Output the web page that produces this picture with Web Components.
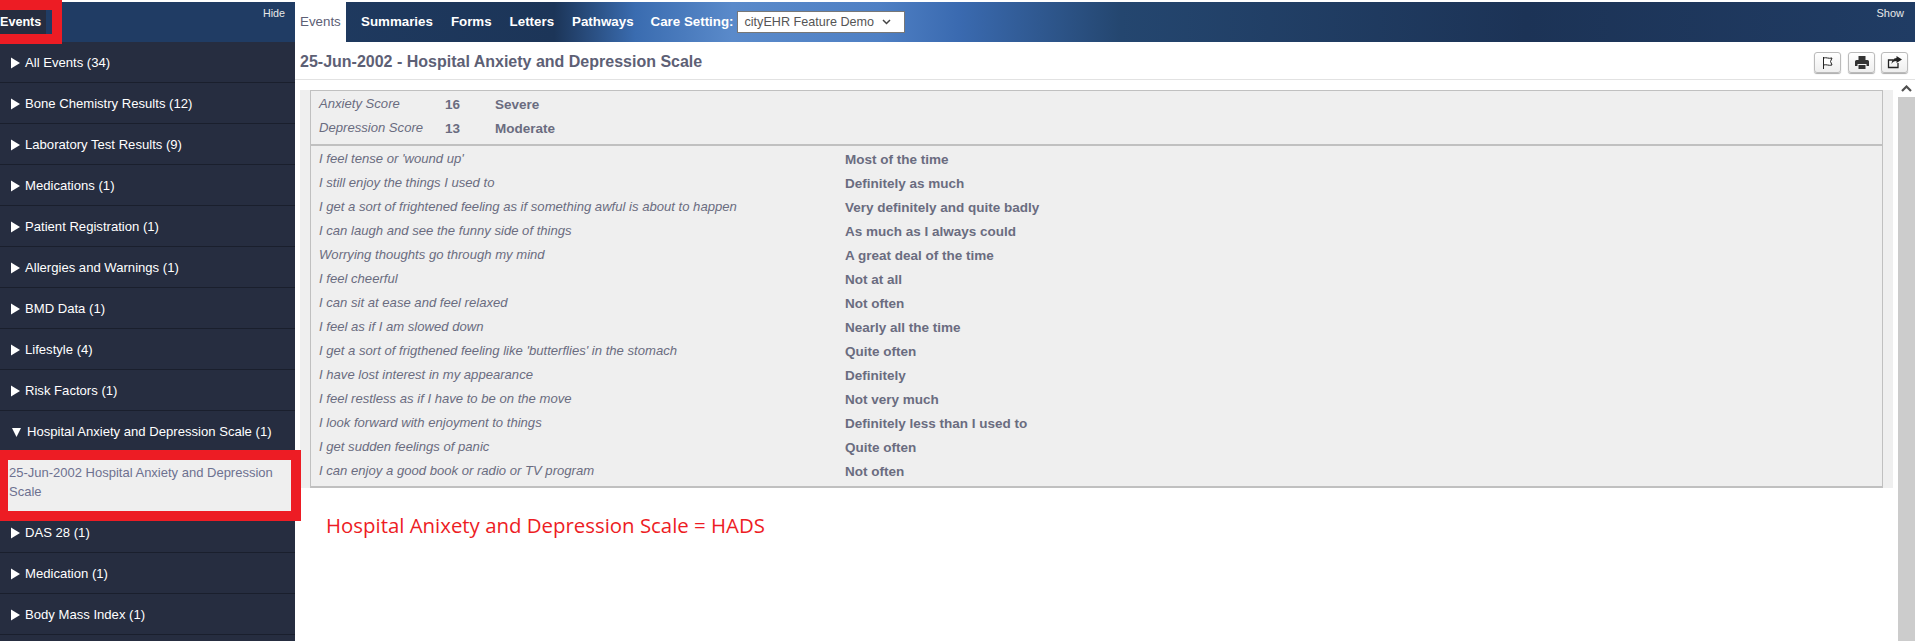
<!DOCTYPE html>
<html>
<head>
<meta charset="utf-8">
<title>cityEHR</title>
<style>
  html, body { margin: 0; height: 100%; overflow: hidden; background: #fff; }
  body { font-family: "Liberation Sans", Arial, sans-serif; }
</style>
</head>
<body>
<ehr-app>
  <ehr-sidebar slot="side">
    <ehr-group label="All Events (34)"></ehr-group>
    <ehr-group label="Bone Chemistry Results (12)"></ehr-group>
    <ehr-group label="Laboratory Test Results (9)"></ehr-group>
    <ehr-group label="Medications (1)"></ehr-group>
    <ehr-group label="Patient Registration (1)"></ehr-group>
    <ehr-group label="Allergies and Warnings (1)"></ehr-group>
    <ehr-group label="BMD Data (1)"></ehr-group>
    <ehr-group label="Lifestyle (4)"></ehr-group>
    <ehr-group label="Risk Factors (1)"></ehr-group>
    <ehr-group label="Hospital Anxiety and Depression Scale (1)" open>25-Jun-2002 Hospital Anxiety and Depression Scale</ehr-group>
    <ehr-group label="DAS 28 (1)"></ehr-group>
    <ehr-group label="Medication (1)"></ehr-group>
    <ehr-group label="Body Mass Index (1)"></ehr-group>
  </ehr-sidebar>
  <ehr-topbar slot="top"></ehr-topbar>
  <ehr-title slot="main">25-Jun-2002 - Hospital Anxiety and Depression Scale</ehr-title>
  <ehr-form slot="main">
    <ehr-score label="Anxiety Score" value="16" level="Severe"></ehr-score>
    <ehr-score label="Depression Score" value="13" level="Moderate"></ehr-score>
    <ehr-answer slot="answers" q="I feel tense or 'wound up'">Most of the time</ehr-answer>
    <ehr-answer slot="answers" q="I still enjoy the things I used to">Definitely as much</ehr-answer>
    <ehr-answer slot="answers" q="I get a sort of frightened feeling as if something awful is about to happen">Very definitely and quite badly</ehr-answer>
    <ehr-answer slot="answers" q="I can laugh and see the funny side of things">As much as I always could</ehr-answer>
    <ehr-answer slot="answers" q="Worrying thoughts go through my mind">A great deal of the time</ehr-answer>
    <ehr-answer slot="answers" q="I feel cheerful">Not at all</ehr-answer>
    <ehr-answer slot="answers" q="I can sit at ease and feel relaxed">Not often</ehr-answer>
    <ehr-answer slot="answers" q="I feel as if I am slowed down">Nearly all the time</ehr-answer>
    <ehr-answer slot="answers" q="I get a sort of frigthened feeling like 'butterflies' in the stomach">Quite often</ehr-answer>
    <ehr-answer slot="answers" q="I have lost interest in my appearance">Definitely</ehr-answer>
    <ehr-answer slot="answers" q="I feel restless as if I have to be on the move">Not very much</ehr-answer>
    <ehr-answer slot="answers" q="I look forward with enjoyment to things">Definitely less than I used to</ehr-answer>
    <ehr-answer slot="answers" q="I get sudden feelings of panic">Quite often</ehr-answer>
    <ehr-answer slot="answers" q="I can enjoy a good book or radio or TV program">Not often</ehr-answer>
  </ehr-form>
  <ehr-note slot="main">Hospital Anixety and Depression Scale = HADS</ehr-note>
</ehr-app>

<script>
function define(name, css, html, init) {
  customElements.define(name, class extends HTMLElement {
    constructor() {
      super();
      this.attachShadow({ mode: 'open' }).innerHTML = '<style>' + css + '</style>' + html;
    }
    connectedCallback() {
      if (init) init(this, this.shadowRoot);
    }
  });
}

define('ehr-app', `
  :host { display: grid; grid-template-columns: 295px 1fr; grid-template-rows: 40px 1fr; height: 639px; margin-top: 2px; position: relative; }
  .side { grid-row: 1 / 3; min-height: 0; overflow: hidden; }
  .top { min-width: 0; }
  .body { display: grid; grid-template-columns: 1fr 17px; min-height: 0; }
  .main { min-width: 0; }
  .bar { background: #ccc; margin-top: 38px; position: relative; }
  .up { height: 17px; background: #fff; display: flex; align-items: center; justify-content: center; }
  .mark { position: absolute; border: solid #ed1c24; box-sizing: border-box; pointer-events: none; }
  .m1 { left: 0; top: -2px; width: 62px; height: 44px; border-width: 10px 10px 10px 0; }
  .m2 { left: 0; top: 448px; width: 301px; height: 71px; border-width: 10px; border-left-width: 8px; }
`, `
  <div class="side"><slot name="side"></slot></div>
  <div class="top"><slot name="top"></slot></div>
  <div class="body">
    <div class="main"><slot name="main"></slot></div>
    <div class="bar"><div class="up"><svg width="11" height="7" viewBox="0 0 11 7"><path d="M1 6l4.500-4.500L10 6" fill="none" stroke="#505050" stroke-width="2.200"/></svg></div></div>
  </div>
  <div class="mark m1"></div>
  <div class="mark m2"></div>
`);

define('ehr-sidebar', `
  :host { display: block; height: 100%; background: #262d40; }
  .head { height: 40px; background: #203c64; position: relative; box-sizing: border-box; }
  .tab { position: absolute; left: 0; top: 8px; height: 24px; width: 46px; background: #262d40; color: #fff; font: bold 12.6px/24px "Liberation Sans", sans-serif; }
  .hide { position: absolute; right: 10px; top: 4px; color: #e8e8e8; font: 10.7px/14px "Liberation Sans", sans-serif; }
`, `
  <div class="head"><span class="tab">Events</span><span class="hide">Hide</span></div>
  <slot></slot>
`);

define('ehr-group', `
  :host { display: block; color: #fff; font: 13.1px/16px "Liberation Sans", sans-serif; }
  .row { height: 39px; padding: 1px 0 0 11px; display: flex; align-items: center; gap: 5px; border-bottom: 1px solid #1a1f2d; }
  :host([open]) .row { border-bottom: 0; height: 37px; padding: 2px 0 0 12px; gap: 6px; }
  svg { flex: none; }
  .item { height: 51px; margin: 0 4px 1px 8px; box-sizing: border-box; background: #efefef; color: #6d7190; padding: 3px 0 0 1px; font-size: 13px; line-height: 19px; display: none; }
  :host([open]) .item { display: block; }
  .gap { display: none; height: 10px; }
  :host([open]) .gap { display: block; }
`, `
  <div class="row"><svg width="9" height="12" viewBox="0 0 9 12"><path d="" fill="#fff"/></svg><span class="t"></span></div>
  <div class="gap"></div>
  <div class="item"><slot></slot></div>
`, (el, root) => {
  root.querySelector('.t').textContent = el.getAttribute('label');
  root.querySelector('path').setAttribute('d', el.hasAttribute('open') ? 'M0 2h9L4.500 11z' : 'M0 0.500l9 5.500-9 5.500z');
});

define('ehr-topbar', `
  :host { display: flex; align-items: flex-start; gap: 18px; height: 40px; position: relative; background: linear-gradient(90deg, #1f3a60 0, #1c3558 16%, #3a6cb0 21%, #5a8aca 27%, #4f80c4 36%, #3a6ab0 41%, #24466f 51%, #1c3356 76%, #203c64 100%); font: bold 13.33px/16px "Liberation Sans", sans-serif; color: #fff; white-space: nowrap; }
  .tab { height: 40px; line-height: 40px; }
  .first { background: #fff; color: #5d6075; font-weight: normal; width: 51px; box-sizing: border-box; padding-left: 5px; margin-right: -3px; }
  .care { height: 40px; display: flex; align-items: center; gap: 3px; margin-left: -1px; }
  .sel { width: 168px; height: 22px; box-sizing: border-box; border: 1px solid #777; background: #fff; color: #555; font: 12.6px/20px "Liberation Sans", sans-serif; padding: 0 13px 0 7px; display: flex; align-items: center; justify-content: space-between; }
  .show { position: absolute; right: 11px; top: 4px; font: 11px/14px "Liberation Sans", sans-serif; color: #e8e8e8; font-weight: normal; }
`, `
  <span class="tab first">Events</span>
  <span class="tab">Summaries</span><span class="tab">Forms</span><span class="tab">Letters</span><span class="tab">Pathways</span>
  <span class="care">Care Setting: <span class="sel">cityEHR Feature Demo<svg width="9" height="6" viewBox="0 0 9 6"><path d="M1 1l3.500 3.500L8 1" fill="none" stroke="#444" stroke-width="1.500"/></svg></span></span>
  <span class="show">Show</span>
`);

define('ehr-title', `
  :host { display: flex; justify-content: space-between; height: 37px; padding: 0 7px 0 5px; margin-right: -17px; border-bottom: 1px solid #e2e2e2; color: #5d6075; font: bold 16px/20px "Liberation Sans", sans-serif; }
  .text { padding-top: 10px; }
  .btns { display: flex; gap: 6px; padding-top: 10px; height: 21px; }
  .btn { width: 27px; height: 21px; box-sizing: border-box; border: 1px solid #bbb; border-radius: 3px; background: linear-gradient(#fff, #eee); box-shadow: 0 1px 1px #aaa; display: flex; align-items: center; justify-content: center; }
  .btn:first-child { margin-right: 1px; }
`, `
  <span class="text"><slot></slot></span>
  <span class="btns">
    <span class="btn"><svg width="13" height="14" viewBox="0 0 13 14"><path d="M2.500 1v12M2.500 2c3-1 5 1 8.500 0L9.500 5.500 11 9c-3.500 1-5.500-1-8.500 0" fill="#fff" stroke="#222" stroke-width="1"/></svg></span>
    <span class="btn"><svg width="14" height="13" viewBox="0 0 14 13"><path fill-rule="evenodd" d="M3.500 0h7v4h-7zM1.500 4h11q1.500 0 1.500 1.500V10h-2.500V8h-9v2H0V5.500Q0 4 1.500 4zM3.500 9h7v4h-7z" fill="#333"/></svg></span>
    <span class="btn"><svg width="15" height="13" viewBox="0 0 15 13"><path d="M11 7v4.500H1.500V4H6" fill="none" stroke="#222" stroke-width="1.300"/><path d="M9.500 0L15 3.500 9.500 7V5C7 5 5.500 6 4.500 8 4.500 4.500 6.500 2.300 9.500 2z" fill="#222"/></svg></span>
  </span>
`);

define('ehr-form', `
  :host { display: block; background: #efefef; margin: 10px 5px 0 5px; padding: 0 10px; height: 398px; box-sizing: border-box; }
  .box { border: 1px solid #c0c0c0; border-width: 1px 1px 2px 1px; height: 398px; box-sizing: border-box; }
  .scores { height: 55px; padding-top: 1px; box-sizing: border-box; border-bottom: 2px solid #c0c0c0; }
  .answers { padding-top: 1px; }
`, `
  <div class="box">
    <div class="scores"><slot></slot></div>
    <div class="answers"><slot name="answers"></slot></div>
  </div>
`);

define('ehr-score', `
  :host { display: flex; height: 24px; align-items: center; font: 13.1px/16px "Liberation Sans", sans-serif; color: #6a6c80; padding-left: 8px; }
  .l { font-style: italic; width: 126px; }
  .v { font-weight: bold; width: 50px; font-size: 13.5px; padding-top: 1px; }
  .s { font-weight: bold; font-size: 13.5px; padding-top: 1px; }
`, `<span class="l"></span><span class="v"></span><span class="s"></span>`, (el, root) => {
  root.querySelector('.l').textContent = el.getAttribute('label');
  root.querySelector('.v').textContent = el.getAttribute('value');
  root.querySelector('.s').textContent = el.getAttribute('level');
});

define('ehr-answer', `
  :host { display: grid; grid-template-columns: 526px 1fr; height: 24px; align-items: center; font: 13.1px/16px "Liberation Sans", sans-serif; color: #6a6c80; padding-left: 8px; }
  .q { font-style: italic; }
  .a { font-weight: bold; font-size: 13.5px; padding-top: 1px; }
`, `<span class="q"></span><span class="a"><slot></slot></span>`, (el, root) => {
  root.querySelector('.q').textContent = el.getAttribute('q');
});

define('ehr-note', `
  :host { display: block; margin: 23px 0 0 31px; color: #ed1c24; font: 20.4px/28px "Open Sans", sans-serif; }
`, `<slot></slot>`);
</script>
</body>
</html>
